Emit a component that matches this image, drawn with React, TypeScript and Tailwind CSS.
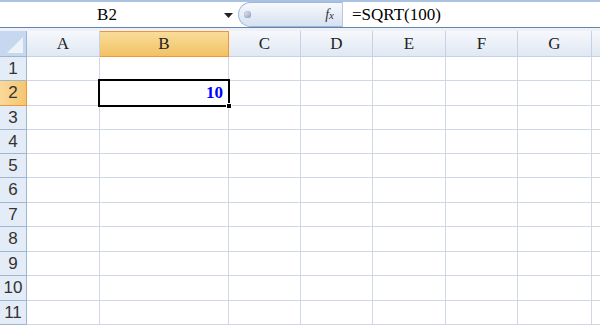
import React from "react";

// column widths include the 1px right gridline
const cols = [
  { name: "A", w: 73 },
  { name: "B", w: 129 },
  { name: "C", w: 72 },
  { name: "D", w: 72 },
  { name: "E", w: 73 },
  { name: "F", w: 72 },
  { name: "G", w: 74 },
  { name: "", w: 72 },
];

const rowHeights = [24, 25, 24, 24, 24, 25, 24, 25, 24, 25, 24];

const serif = { fontFamily: '"Liberation Serif", "Times New Roman", serif' };
const sans = { fontFamily: '"Liberation Sans", Arial, sans-serif' };

function FormulaBar() {
  return (
    <div className="flex h-[27px] border-t-2 border-[#a9c2e2] bg-white">
      <div className="relative flex w-[238px] shrink-0 items-center">
        <span className="flex-1 pr-[24px] text-center text-[17px] text-black" style={serif}>
          B2
        </span>
        <svg width="9" height="5" viewBox="0 0 9 5" className="absolute left-[224px] top-[11px]">
          <path d="M0 0H9L4.5 5Z" fill="#222" />
        </svg>
      </div>
      <div className="flex h-[25px] w-[104px] shrink-0 items-center rounded-l-full border border-r-0 border-[#9fb7d6] bg-gradient-to-b from-[#f7f9fd] to-[#d6e1f0] pl-[5px] pr-[8px]">
        <span className="h-[7px] w-[7px] rounded-full bg-gradient-to-br from-[#e8eef6] to-[#8fa3bd] shadow-[inset_0_0_1px_#6c7f99]" />
        <span className="ml-auto text-[14px] italic text-[#333]" style={serif}>
          f<span className="text-[11px]">x</span>
        </span>
      </div>
      <div className="flex flex-1 items-center border-l border-[#b7c8de] pl-[9px]">
        <span className="text-[17px] text-black" style={serif}>
          =SQRT(100)
        </span>
      </div>
    </div>
  );
}

function HeaderRow() {
  return (
    <div className="flex h-[30px] border-t border-[#6384ad] bg-[#eef2f8] pt-[3px]">
      <div className="relative h-[26px] w-[27px] shrink-0 border-r border-b border-[#9eb6ce] bg-[#c5d8ef]">
        <svg width="16" height="16" viewBox="0 0 16 16" className="absolute right-[3px] bottom-[3px]">
          <path d="M16 0V16H0Z" fill="#eef3f9" />
        </svg>
      </div>
      {cols.map((c, i) => {
        const sel = c.name === "B";
        return (
          <div
            key={i}
            style={{ width: c.w, ...serif }}
            className={
              sel
                ? "flex h-[26px] shrink-0 items-center justify-center border-t border-r border-b border-[#f29536] bg-gradient-to-b from-[#f9dc9a] to-[#f2c263] text-[17px] text-[#222]"
                : "flex h-[26px] shrink-0 items-center justify-center border-r border-b border-[#c5d2e3] bg-gradient-to-b from-[#f6f8fc] to-[#e0e8f3] text-[17px] text-[#222]"
            }
          >
            {c.name}
          </div>
        );
      })}
    </div>
  );
}

function Row({ n, h }: { n: number; h: number }) {
  const sel = n === 2;
  return (
    <div className="flex" style={{ height: h }}>
      <div
        style={sans}
        className={
          sel
            ? "flex w-[27px] shrink-0 items-center justify-center border-r border-b border-[#f29536] bg-gradient-to-r from-[#f9d99a] to-[#f4c670] text-[17px] text-[#333]"
            : "flex w-[27px] shrink-0 items-center justify-center border-r border-b border-[#9eb6ce] bg-[#e4ecf7] text-[17px] text-[#333]"
        }
      >
        {n}
      </div>
      {cols.map((c, i) => (
        <div
          key={i}
          style={{ width: c.w, ...serif }}
          className="flex shrink-0 items-center justify-end border-r border-b border-[#d0d7e5] bg-white pr-[5px] text-[17px] font-semibold text-[#0000ff]"
        >
          {sel && c.name === "B" ? "10" : ""}
        </div>
      ))}
    </div>
  );
}

export default function App() {
  return (
    <div className="relative h-[325px] w-[600px] overflow-hidden bg-white">
      <FormulaBar />
      <HeaderRow />
      {rowHeights.map((h, i) => (
        <Row key={i} n={i + 1} h={h} />
      ))}
      {/* active cell outline */}
      <div className="pointer-events-none absolute left-[98px] top-[79px] h-[28px] w-[132px] border-2 border-black" />
      <div className="pointer-events-none absolute left-[226px] top-[103px] h-[6px] w-[6px] border border-white bg-black" />
    </div>
  );
}
